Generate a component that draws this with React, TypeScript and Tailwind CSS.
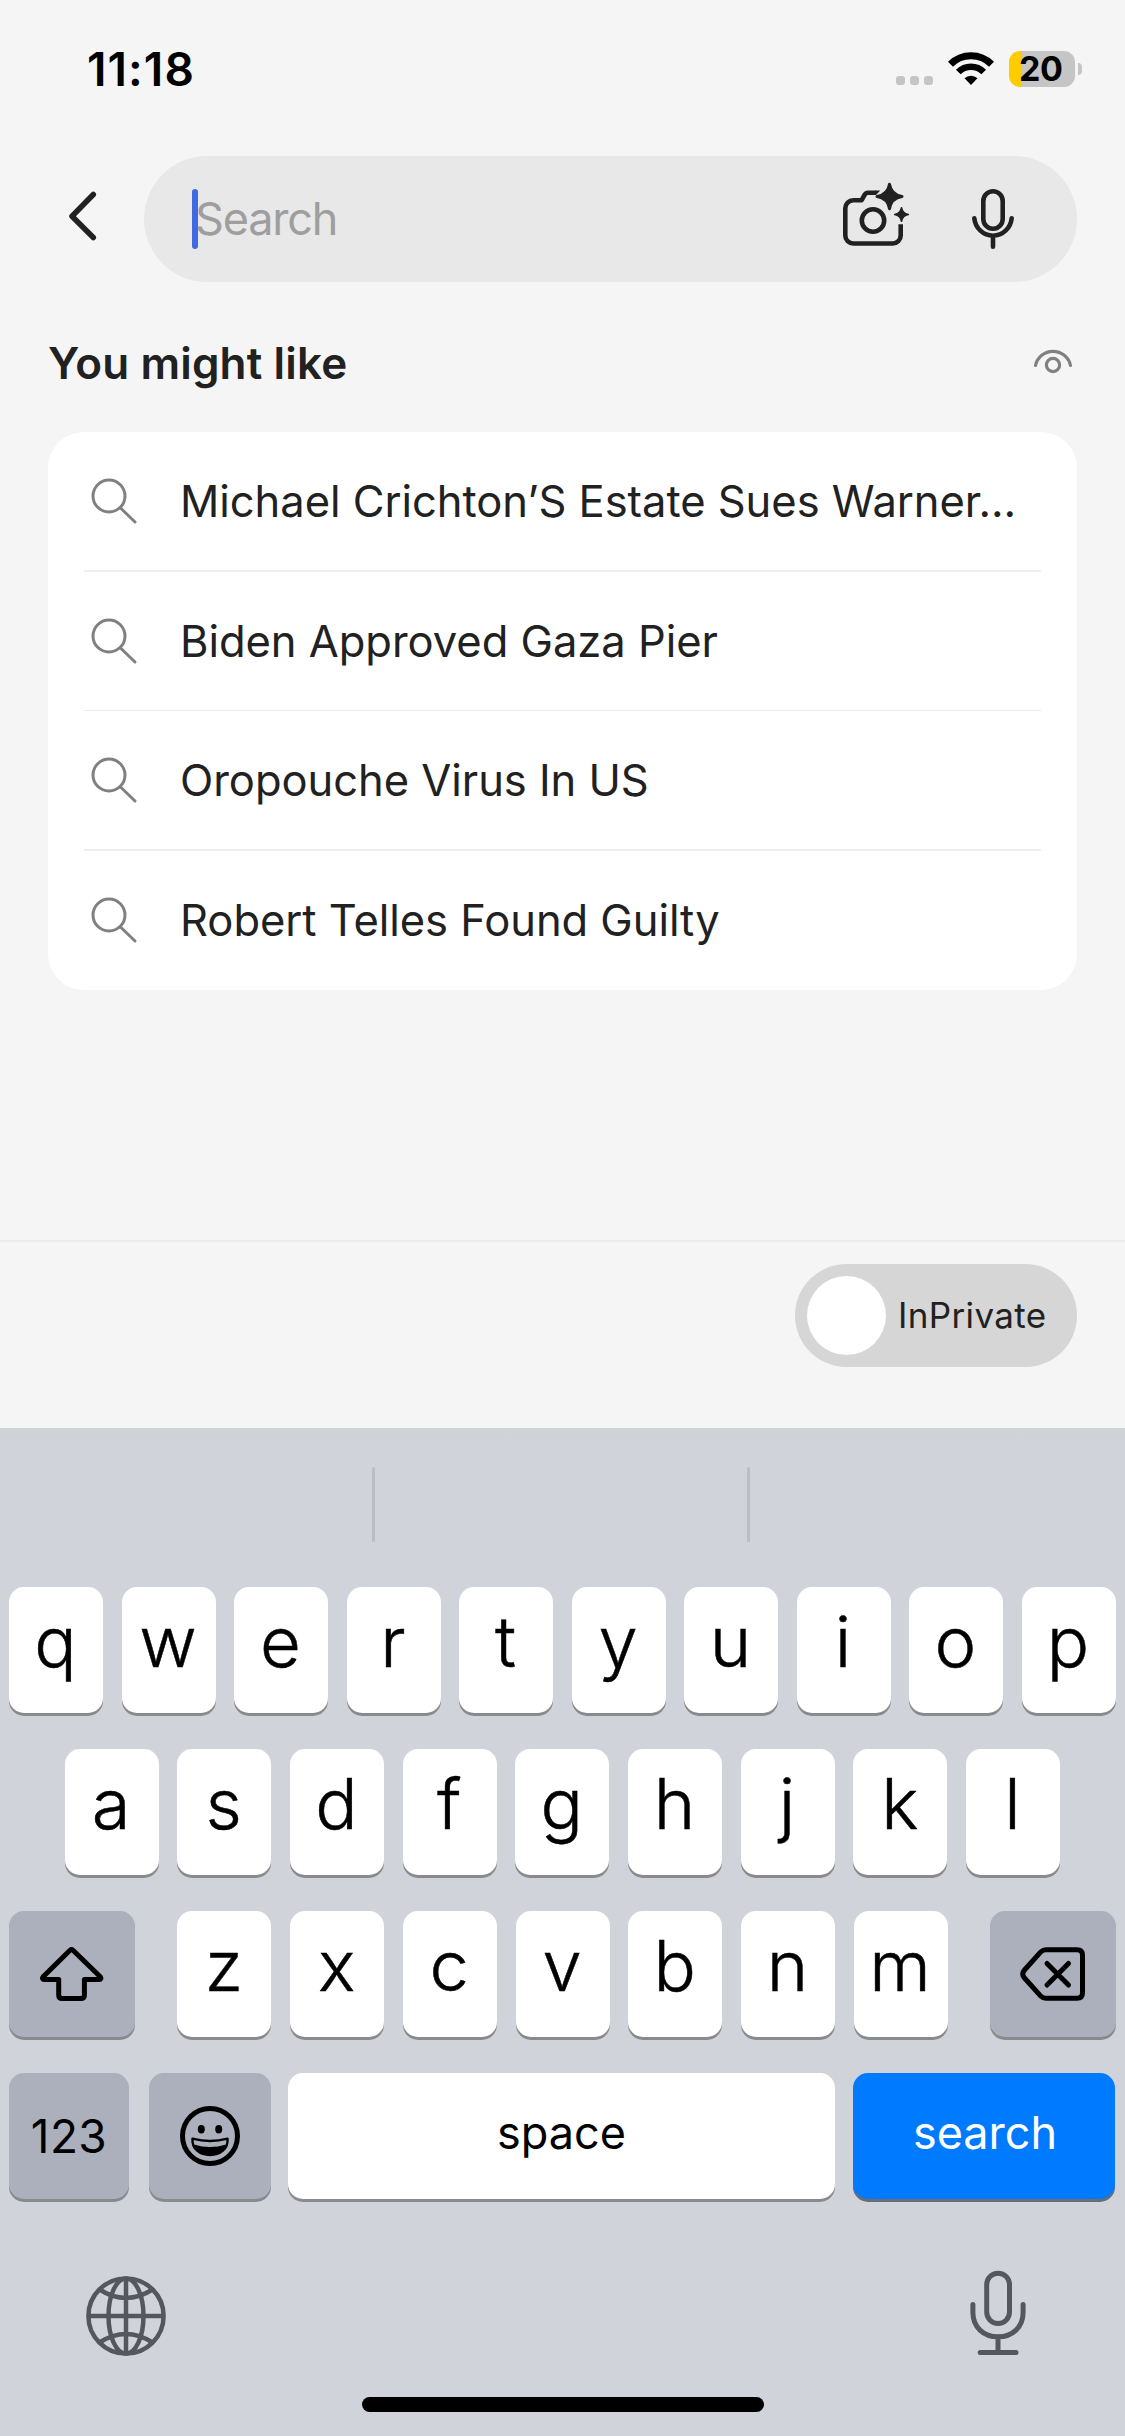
import type { ReactNode } from "react";

const suggestions = [
  { text: "Michael Crichton’S Estate Sues Warner…", row: "h-[138px]" },
  { text: "Biden Approved Gaza Pier", row: "h-[140px] border-t-2 border-[#eeeeee]" },
  { text: "Oropouche Virus In US", row: "h-[139px] border-t border-[#ebebeb]" },
  { text: "Robert Telles Found Guilty", row: "h-[141px] border-t-2 border-[#eeeeee] pb-[2px]" },
];

function StatusBar() {
  return (
    <header className="flex h-[156px] items-start justify-between pl-[87px] pr-[43px] pt-[51px] text-black">
      <span className="text-[46px] font-semibold leading-[36px] tracking-[1.1px]">11:18</span>
      <div className="flex h-9 items-center">
        <div className="mt-[23px] flex gap-[5px]">
          <span className="size-[9px] rounded-[3px] bg-[#c5c5c5]" />
          <span className="size-[9px] rounded-[3px] bg-[#c5c5c5]" />
          <span className="size-[9px] rounded-[3px] bg-[#c5c5c5]" />
        </div>
        <svg className="ml-[15px] h-[34px] w-[46px]" viewBox="948 52 46 34" fill="none" stroke="#000">
          <path d="M950.500 64.200a29 29 0 0 1 41 0" strokeWidth="7" />
          <path d="M958.300 72a18 18 0 0 1 25.400 0" strokeWidth="6.600" />
          <path d="M971 85l-6.500-6.800a9.500 9.500 0 0 1 13 0z" fill="#000" stroke="none" />
        </svg>
        <div className="ml-[15px] flex h-9 w-[66px] items-center rounded-[11px] bg-[linear-gradient(to_right,#ffcc00_13px,#c5c5c5_13px)] pl-[10px]">
          <span className="text-[34px] font-bold leading-9 tracking-[-0.5px]">20</span>
        </div>
        <span className="ml-[3px] h-3 w-1 rounded-r-full bg-[#c5c5c5]" />
      </div>
    </header>
  );
}

function SearchHeader() {
  return (
    <div className="flex h-[126px] items-center pl-[68px] pr-12">
      <svg className="mb-[6px] h-[50px] w-[30px]" viewBox="68 191 30 50" fill="none" stroke="#212121" strokeWidth="5.500" strokeLinecap="round" strokeLinejoin="round">
        <path d="M93.300 194.500L72 216.200L93.300 237.500" />
      </svg>
      <div className="ml-[46px] flex h-[126px] flex-1 items-center rounded-full bg-[#e8e8e8] pl-12">
        <span className="h-[60px] w-[6px] rounded-full bg-[#4169e1]" />
        <span className="-ml-[3px] text-[45px] leading-[60px] tracking-[-1.2px] text-[#9e9e9e]">Search</span>
        <svg className="mb-[8px] ml-auto h-[66px] w-[68px]" viewBox="842 182 68 66" fill="none" stroke="#212121" strokeWidth="4.600" strokeLinejoin="round">
          <path d="M900.700 224.200V235.500a8 8 0 0 1-8 8h-39.400a8 8 0 0 1-8-8v-27.200a8 8 0 0 1 8-8h8.200l3.300-5.800a3.600 3.600 0 0 1 3.200-1.800h8" />
          <path d="M875 190.400h5.200l-4.200 4.600h-1z" fill="#212121" stroke="none" />
          <circle cx="873" cy="220.500" r="11.200" />
          <path d="M889.500 184.300Q891.200 194.800 902 196.500Q891.200 198.200 889.500 208.700Q887.800 198.200 877 196.500Q887.800 194.800 889.500 184.300z" fill="#212121" strokeWidth="3" />
          <path d="M901.500 207.700Q902.500 213.500 908.300 214.500Q902.500 215.500 901.500 221.300Q900.500 215.500 894.700 214.500Q900.500 213.500 901.500 207.700z" fill="#212121" strokeWidth="1.600" />
        </svg>
        <svg className="ml-[60px] mr-[61px] h-[62px] w-[46px]" viewBox="970 188 46 62" fill="none" stroke="#212121" strokeWidth="4.600" strokeLinecap="round">
          <rect x="983.300" y="191.300" width="19.400" height="37.400" rx="9.700" />
          <path d="M974.300 218.200a18.800 19.500 0 0 0 37.400 0M993 238.500v8.200" />
        </svg>
      </div>
    </div>
  );
}

function Suggestions() {
  return (
    <section className="px-12">
      <div className="flex h-[150px] items-center pt-[11px]">
        <h2 className="text-[44px] font-semibold leading-[60px] tracking-[0.15px] text-[#212121]">You might like</h2>
        <svg className="mb-[4px] ml-auto mr-[4px] h-[26px] w-[40px]" viewBox="1033 348 40 26" fill="none" stroke="#808080" strokeWidth="3.200" strokeLinecap="round">
          <path d="M1035.500 365.500a17.900 17.900 0 0 1 35 0" />
          <circle cx="1053" cy="365" r="6.600" />
        </svg>
      </div>
      <ul className="flex h-[558px] flex-col rounded-[36px] bg-white px-9">
        {suggestions.map((s) => (
          <li key={s.text} className={"flex items-center " + s.row}>
            <svg className="ml-[6px] h-[48px] w-[48px] shrink-0" viewBox="90 477 48 48" fill="none" stroke="#808080" strokeWidth="3" strokeLinecap="round">
              <circle cx="109" cy="496" r="16" />
              <path d="M120.500 508L135 522" />
            </svg>
            <span className="ml-[42px] whitespace-nowrap text-[43.500px] leading-[60px] tracking-[-0.03px] text-[#212121]">{s.text}</span>
          </li>
        ))}
      </ul>
    </section>
  );
}

function PrivateBar() {
  return (
    <div className="mt-auto flex h-[188px] items-start justify-end border-t-2 border-[#ececec] pr-12 pt-[22px]">
      <div className="flex h-[103px] w-[282px] items-center rounded-full bg-[#d6d6d6] pl-3">
        <span className="size-[79px] rounded-full bg-white" />
        <span className="mb-[1px] ml-[12px] text-[35px] leading-[50px] tracking-[0.35px] text-[#212121]">InPrivate</span>
      </div>
    </div>
  );
}

const letterKey =
  "h-[126px] w-[94px] rounded-[15px] bg-white pb-4 pr-[1px] text-center text-[70.5px] font-light leading-[110px] shadow-[0_3px_0_#898a8d] [-webkit-text-stroke:0.5px_#000]";

function Letters({ keys }: { keys: string }) {
  return (
    <>
      {keys.split("").map((k) => (
        <button key={k} className={letterKey}>
          {k}
        </button>
      ))}
    </>
  );
}

function GreyKey({ className, children }: { className: string; children: ReactNode }) {
  return (
    <button className={"flex h-[126px] items-center justify-center rounded-[15px] bg-[#abb0bc] shadow-[0_3px_0_#898a8d] " + className}>
      {children}
    </button>
  );
}

function Keyboard() {
  return (
    <section className="flex h-[1008px] flex-col bg-[#d0d3da] text-black">
      <div className="flex h-[159px] bg-[linear-gradient(to_bottom,#d1d2d5,#d0d3da_12px)] pt-[39px]">
        <span className="ml-[372px] h-[75px] w-[3px] rounded-full bg-[#bbbdc2]" />
        <span className="ml-[372px] h-[75px] w-[3px] rounded-full bg-[#bbbdc2]" />
      </div>
      <div className="flex h-[162px] gap-[18.500px] pl-[9px]">
        <Letters keys="qwertyuiop" />
      </div>
      <div className="flex h-[162px] gap-[18.700px] pl-[64.500px]">
        <Letters keys="asdfghjkl" />
      </div>
      <div className="flex h-[162px] justify-between px-[9px]">
        <GreyKey className="w-[126px]">
          <svg className="h-[56px] w-[66px]" viewBox="39 1946 66 56" fill="none" stroke="#000" strokeWidth="5" strokeLinejoin="round">
            <path d="M70 1950.300q1.500-1.300 3 0L100 1976.500c1.500 1.700 1 3-1 3h-14.600v15.500q0 3.500-3.500 3.500h-18.700q-3.500 0-3.500-3.500v-15.500H44.400c-2 0-2.500-1.300-1-3z" />
          </svg>
        </GreyKey>
        <div className="flex gap-[18.700px]">
          <Letters keys="zxcvbnm" />
        </div>
        <GreyKey className="w-[126px]">
          <svg className="h-[56px] w-[68px]" viewBox="1019 1946 68 56" fill="none" stroke="#000" strokeWidth="5" strokeLinejoin="round" strokeLinecap="round">
            <path d="M1046 1949.700h31q5.500 0 5.500 5.500v37.600q0 5.500-5.500 5.500h-31q-3 0-5-2l-16.500-18.300q-3.500-4 0-8l16.500-18.300q2-2 5-2z" />
            <path d="M1047 1963.500l21.500 21.500m0-21.500l-21.500 21.500" />
          </svg>
        </GreyKey>
      </div>
      <div className="flex h-[162px] px-[9px]">
        <GreyKey className="w-[120px]">
          <span className="text-[46px] font-normal leading-[60px] tracking-[0.4px]">123</span>
        </GreyKey>
        <GreyKey className="ml-5 w-[122px]">
          <svg className="mr-[1px] h-[62px] w-[62px]" viewBox="0 0 62 62" fill="none" stroke="#000">
            <circle cx="31" cy="31" r="27.500" strokeWidth="5" />
            <ellipse cx="22.300" cy="24.300" rx="3.500" ry="4.200" fill="#000" stroke="none" />
            <ellipse cx="39.700" cy="24.300" rx="3.500" ry="4.200" fill="#000" stroke="none" />
            <path d="M13.500 33.700q17.500 4.600 35 0C49.500 44 41 50 31 50S12.500 44 13.500 33.700z" strokeWidth="2.400" strokeLinejoin="round" />
            <path d="M15 39.500q16 5 32 0C44.500 47 38 50.500 31 50.500S17.500 47 15 39.500z" fill="#000" stroke="none" />
          </svg>
        </GreyKey>
        <button className="ml-[17px] h-[126px] w-[547px] rounded-[15px] bg-white pb-[7px] text-[45px] leading-[119px] shadow-[0_3px_0_#898a8d]">
          space
        </button>
        <button className="ml-[18px] h-[126px] w-[262px] rounded-[15px] bg-[#007aff] pb-[7px] pl-[2px] text-[45px] leading-[119px] text-white shadow-[0_3px_0_#6a6d75]">
          search
        </button>
      </div>
      <div className="flex items-start justify-between pl-[85px] pr-[97px] pt-[34px]">
        <svg className="mt-[6px] h-[82px] w-[82px]" viewBox="-41 -41 82 82" fill="none" stroke="#54585e" strokeWidth="4.500">
          <circle r="37.600" />
          <ellipse rx="17.500" ry="37.600" />
          <path d="M0-38V38M-38 0H38M-26.500-26.500Q0-9.500 26.500-26.500M-26.500 26.500Q0 9.500 26.500 26.500" />
        </svg>
        <svg className="h-[88px] w-[60px]" viewBox="967.500 2269 60 88" fill="none" stroke="#54585e" strokeWidth="5" strokeLinecap="round">
          <rect x="986.200" y="2273.200" width="22.800" height="50.300" rx="11.400" />
          <path d="M972.400 2304.500v8c0 14.500 10.500 24.300 25.100 24.300s25.100-9.800 25.100-24.300v-8M997.500 2337v15.300M979.700 2352.500h35.800" />
        </svg>
      </div>
      <div className="mb-6 ml-[362px] mt-auto h-[15px] w-[402px] rounded-full bg-black" />
    </section>
  );
}

export default function App() {
  return (
    <main className="flex h-[2436px] w-[1125px] flex-col overflow-hidden bg-[#f5f5f5] font-['Inter',sans-serif]">
      <StatusBar />
      <SearchHeader />
      <Suggestions />
      <PrivateBar />
      <Keyboard />
    </main>
  );
}
